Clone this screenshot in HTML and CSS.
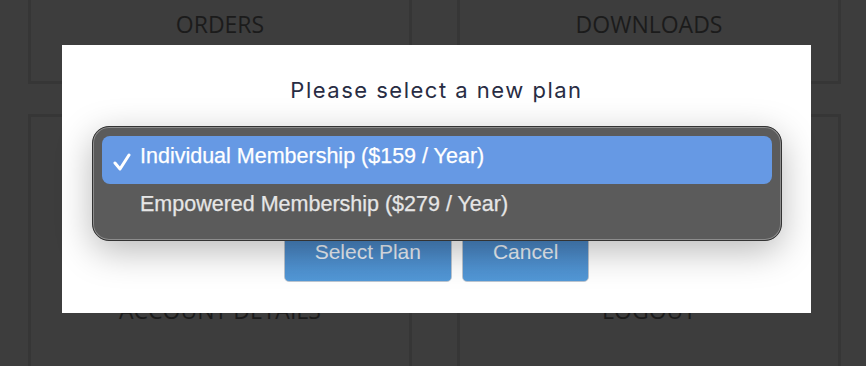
FILE: index.html
```html
<!DOCTYPE html>
<html lang="en">
<head>
    <meta charset="UTF-8">
    <meta name="viewport" content="width=device-width, initial-scale=1.0">
    <title>My Account</title>
    <link rel="stylesheet" href="styles.css">
</head>
<body>
    <div class="dashboard">
        <a class="card card-top" href="#">ORDERS</a>
        <a class="card card-top" href="#">DOWNLOADS</a>
        <a class="card card-bottom" href="#">ACCOUNT DETAILS</a>
        <a class="card card-bottom" href="#">LOGOUT</a>
    </div>

    <div class="modal">
        <h2 class="modal-title">Please select a new plan</h2>
        <div class="plan-select"></div>
        <div class="modal-actions">
            <button class="button">Select Plan</button>
            <button class="button">Cancel</button>
        </div>

        <ul class="plan-menu">
            <li class="plan-option selected">
                <svg class="check" width="18" height="18" viewBox="0 0 18 18">
                    <polyline points="2,10 7,16 16,2" fill="none" stroke="#fff" stroke-width="3" stroke-linecap="round" stroke-linejoin="round"/>
                </svg>
                Individual Membership ($159 / Year)
            </li>
            <li class="plan-option">Empowered Membership ($279 / Year)</li>
        </ul>
    </div>
</body>
</html>
```

FILE: styles.css
```css
html, body {
    overflow: hidden;
}
body {
    margin: 0;
    background-color: #3d3d3d;
    font-family: 'Open Sans', sans-serif;
    height: 366px;
}
.dashboard {
    display: grid;
    grid-template-columns: 384px 384px;
    grid-template-rows: 120px 392px;
    column-gap: 45px;
    row-gap: 30px;
    padding-left: 28px;
    margin-top: -36px;
}
.card {
    display: flex;
    align-items: center;
    justify-content: center;
    border: 3px solid #363636;
    color: #1b1b1b;
    font-size: 23px;
    text-decoration: none;
}
.modal {
    position: absolute;
    top: 45px;
    left: 62px;
    width: 749px;
    height: 268px;
    background-color: #ffffff;
    display: flex;
    flex-direction: column;
    align-items: center;
}
.modal-title {
    margin: 0;
    padding-top: 30px;
    font-family: 'Inter', sans-serif;
    font-weight: 400;
    font-size: 22px;
    line-height: 30px;
    letter-spacing: 1.5px;
    color: #282c43;
}
.plan-select {
    width: 600px;
    height: 90px;
    margin-top: 12px;
}
.modal-actions {
    display: flex;
    gap: 10px;
    margin-top: 15px;
}
.button {
    height: 60px;
    padding: 0 30px;
    border: 1px solid #bcc6d1;
    border-radius: 5px;
    background: linear-gradient(#4780bf, #5298d7);
    color: #edf2f8;
    font-family: 'Liberation Sans', Arial, sans-serif;
    font-size: 21px;
    cursor: pointer;
}
.plan-menu {
    position: absolute;
    top: 81px;
    left: 30px;
    width: 690px;
    height: 115px;
    box-sizing: border-box;
    margin: 0;
    padding: 9px;
    list-style: none;
    background-color: #5b5b5b;
    border: 1px solid #333333;
    border-radius: 17px;
    box-shadow: inset 0 0 0 1px #8c8c8c, 0 10px 36px rgba(0, 0, 0, 0.28);
}
.plan-option {
    display: flex;
    align-items: center;
    height: 47px;
    box-sizing: border-box;
    padding: 0 0 7px 38px;
    border-radius: 8px;
    color: #e6e6e6;
    font-family: 'Liberation Sans', Arial, sans-serif;
    font-size: 21.5px;
    -webkit-text-stroke: 0.25px currentColor;
    position: relative;
}
.plan-option.selected {
    height: 48px;
    background-color: #6699e4;
    color: #ffffff;
}
.check {
    position: absolute;
    left: 11px;
    top: 17px;
}
```
